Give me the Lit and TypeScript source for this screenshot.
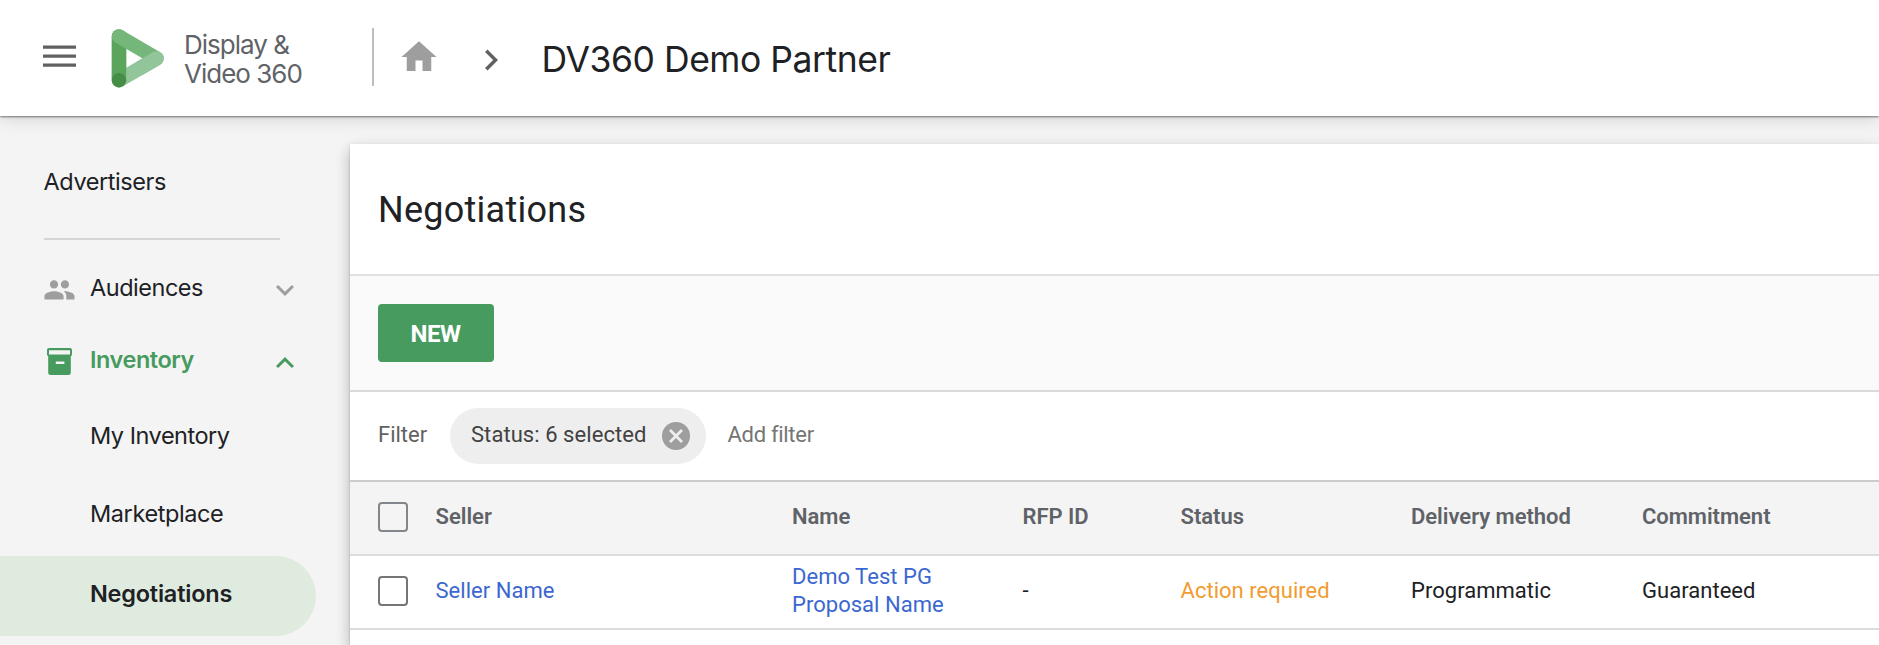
import { LitElement, html, css, svg, nothing } from "lit";
import { customElement, property } from "lit/decorators.js";
import { classMap } from "lit/directives/class-map.js";

@customElement("app-bar")
class AppBar extends LitElement {
  static styles = css`
    :host { display: block; }
    .bar {
      position: relative;
      z-index: 2;
      box-sizing: border-box;
      height: 116px;
      padding-left: 43px;
      display: flex;
      align-items: flex-start;
      background: #fff;
      box-shadow: 0 1px 2px rgba(0, 0, 0, 0.5), 0 3px 16px rgba(0, 0, 0, 0.13);
    }
    svg { display: block; flex: none; }
    .menu { margin-top: 45px; }
    .logo { margin: 28px 0 0 35px; }
    .brand {
      margin: 31px 0 0 19px;
      width: 188px;
      font: 400 26px/28.8px Inter, sans-serif;
      letter-spacing: -1px;
      color: #5f6368;
      white-space: nowrap;
    }
    .rule { width: 2px; height: 58px; margin-top: 28px; background: #bdbdbd; }
    .home { margin: 35.5px 0 0 24px; }
    .next { margin: 39px 0 0 29.5px; }
    h1 {
      margin: 37px 0 0 30px;
      font: 400 35.5px/46px Inter, sans-serif;
      letter-spacing: -0.46px;
      color: #202124;
      white-space: nowrap;
    }
  `;
  render() {
    return html`<header class="bar">
      <svg class="menu" width="33" height="23" viewBox="0 0 33 23" fill="#616161">
        <path d="M0 .6h33v3.2H0zM0 9.6h33v3.2H0zM0 18.6h33v3.2H0z" />
      </svg>
      <svg class="logo" width="54" height="61" viewBox="0 0 54 61" fill="none" stroke-width="14.4" stroke-linecap="round">
        <path d="M8 52V8.4" stroke="#5aa55b" />
        <path d="M8 52.2L45.6 30.4" stroke="#92c69a" />
        <path d="M8 52.2V8.4" stroke="#5aa55b" stroke-linecap="butt" />
        <path d="M8 8.4L45.6 30.4" stroke="#75b67b" stroke-linecap="butt" />
        <circle cx="8" cy="8.4" r="7.2" fill="#75b67b" stroke="none" />
        <circle cx="45.6" cy="30.4" r="7.2" fill="#92c69a" stroke="none" />
        <path d="M28.3 40.4L45.6 30.4" stroke="#92c69a" stroke-linecap="butt" />
        <circle cx="8" cy="52.2" r="7.2" fill="#468e47" stroke="none" />
      </svg>
      <div class="brand">Display &amp;<br />Video 360</div>
      <div class="rule"></div>
      <svg class="home" width="42" height="42" viewBox="0 0 24 24" fill="#9e9e9e">
        <path d="M10 20v-6h4v6h5v-8h3L12 3 2 12h3v8z" />
      </svg>
      <svg class="next" width="42" height="42" viewBox="0 0 24 24" fill="#616161">
        <path d="M10 6L8.59 7.41 13.17 12l-4.58 4.59L10 18l6-6z" />
      </svg>
      <h1>DV360 Demo Partner</h1>
    </header>`;
  }
}

const ICONS: Record<string, unknown> = {
  people: svg`<path transform="translate(-.9 -.5) scale(1.365)" d="M16 11c1.66 0 2.99-1.34 2.99-3S17.66 5 16 5c-1.66 0-3 1.34-3 3s1.34 3 3 3zm-8 0c1.66 0 2.99-1.34 2.99-3S9.66 5 8 5C6.34 5 5 6.34 5 8s1.34 3 3 3zm0 2c-2.33 0-7 1.17-7 3.5V19h14v-2.5c0-2.33-4.67-3.5-7-3.5zm8 0c-.29 0-.62.02-.97.05 1.16.84 1.97 1.97 1.97 3.45V19h6v-2.5c0-2.33-4.67-3.5-7-3.5z"/>`,
  archive: svg`<path fill-rule="evenodd" d="M4 2h21a2 2 0 0 1 2 2v4.5a2 2 0 0 1-1.2 1.800V26.500a2.500 2.500 0 0 1-2.500 2.500H5.700a2.500 2.500 0 0 1-2.500-2.500V10.300A2 2 0 0 1 2 8.500V4a2 2 0 0 1 2-2zM4 4.200v4.300h21V4.200zM10.800 15.400v2.500h8.600v-2.500z"/>`,
};

@customElement("side-nav")
class SideNav extends LitElement {
  static styles = css`
    :host { display: block; font: 400 23.5px/40px Inter, sans-serif; letter-spacing: -0.48px; color: #202124; }
    nav { width: 316px; padding-top: 46px; }
    .top { display: block; padding-left: 43.5px; height: 76px; letter-spacing: -0.42px; }
    hr { margin: 0 0 11px 44px; width: 236px; border: 0; height: 2px; background: #d5d5d5; }
    .group { display: flex; align-items: center; height: 73px; padding-left: 44px; }
    .group svg { display: block; flex: none; }
    .group .icon { margin: 3px 15px 0 0; fill: #9e9e9e; }
    .group .label { width: 176.5px; }
    .group .caret { margin-top: 5px; fill: #9e9e9e; }
    .open { height: 72px; color: #489b5f; font-weight: 600; letter-spacing: -0.45px; }
    .open .icon, .open .caret { fill: #489b5f; }
    .open .icon { margin-left: .500px; margin-right: 14.500px; }
    .leaf { display: flex; align-items: center; padding-left: 90px; height: 79px; }
    .leaf.short { height: 78px; margin-bottom: 3px; letter-spacing: -0.4px; }
    .leaf.active {
      box-sizing: border-box;
      height: 80px;
      padding-bottom: 5px;
      border-radius: 0 40px 40px 0;
      background: #e0ebdf;
      font-weight: 600;
      letter-spacing: -0.22px;
    }
  `;
  group(icon: string, label: string, open: boolean) {
    return html`<div class=${classMap({ group: true, open })}>
      <svg class="icon" width="31" height="31" viewBox="0 0 31 31">${ICONS[icon]}</svg>
      <span class="label">${label}</span>
      <svg class="caret" width="36" height="36" viewBox="0 0 24 24">
        <path d=${open ? "M12 8l-6 6 1.41 1.41L12 10.83l4.59 4.58L18 14z" : "M16.59 8.59L12 13.17 7.41 8.59 6 10l6 6 6-6z"} />
      </svg>
    </div>`;
  }
  render() {
    return html`<nav>
      <span class="top">Advertisers</span>
      <hr />
      ${this.group("people", "Audiences", false)} ${this.group("archive", "Inventory", true)}
      <div class="leaf">My Inventory</div>
      <div class="leaf short">Marketplace</div>
      <div class="leaf active">Negotiations</div>
    </nav>`;
  }
}

@customElement("check-box")
class CheckBox extends LitElement {
  @property({ type: Boolean, reflect: true }) muted = false;
  static styles = css`
    :host { display: block; width: 30px; height: 30px; box-sizing: border-box; border: 2px solid #757575; border-radius: 4px; }
    :host([muted]) { border-color: #80868b; }
  `;
  render() {
    return nothing;
  }
}

const COLUMNS = ["Seller", "Name", "RFP ID", "Status", "Delivery method", "Commitment"];
const ROWS = [
  [
    { text: "Seller Name", kind: "link" },
    { text: "Demo Test PG Proposal Name", kind: "link" },
    { text: "-", kind: "plain" },
    { text: "Action required", kind: "warn" },
    { text: "Programmatic", kind: "plain" },
    { text: "Guaranteed", kind: "plain" },
  ],
];

@customElement("negotiations-panel")
class NegotiationsPanel extends LitElement {
  static styles = css`
    :host { display: block; font: 400 22px/28px Roboto, sans-serif; color: #202124; }
    .panel { height: 100%; background: #fff; box-shadow: 0 1px 2px rgba(0, 0, 0, 0.2), 0 6px 14px rgba(0, 0, 0, 0.27); }
    h2 {
      margin: 0;
      box-sizing: border-box;
      height: 132px;
      padding: 42px 0 0 28px;
      border-bottom: 2px solid #e0e0e0;
      font: 400 36px/48px Roboto, sans-serif;
      letter-spacing: 0.26px;
    }
    .tools {
      box-sizing: border-box;
      height: 116px;
      padding: 28px 27.5px;
      border-bottom: 2px solid #dadada;
      background: #fafafa;
    }
    button {
      display: block;
      width: 116px;
      height: 58px;
      padding: 2px 0 0;
      border: 0;
      border-radius: 4px;
      background: #489b5f;
      color: #fff;
      font: 700 24px/28px Roboto, sans-serif;
      letter-spacing: -0.45px;
    }
    .filters {
      box-sizing: border-box;
      height: 90px;
      padding-left: 28px;
      display: flex;
      align-items: flex-start;
      padding-top: 16px;
      border-bottom: 2px solid #ccc;
      color: #757575;
    }
    .filters > span { line-height: 53px; }
    .caption { width: 72px; color: #616161; }
    .chip {
      box-sizing: border-box;
      width: 256px;
      height: 56px;
      padding-left: 21px;
      border-radius: 28px;
      background: #eee;
      color: #424242;
      display: flex;
      line-height: 53px;
      letter-spacing: 0.06px;
    }
    .chip span { width: 190.5px; white-space: nowrap; }
    .chip svg { display: block; margin-top: 14px; }
    .add { margin-left: 21.5px; letter-spacing: -0.3px; }
    .row {
      box-sizing: border-box;
      height: 74px;
      padding-left: 27.5px;
      display: grid;
      grid-template-columns: 58px 356.5px 230.5px 158px 230.5px 231px 1fr;
      align-items: center;
      border-bottom: 2px solid #dadce0;
    }
    .row > span { padding-bottom: 3px; letter-spacing: 0.03px; }
    .row > check-box { margin-bottom: 2px; }
    .head { background: #f4f4f4; color: #5f6368; font-weight: 600; }
    .head > span { letter-spacing: -0.03px; }
    .name { width: 170px; }
    .link { color: #3b67d0; }
    .warn { color: #f29b31; }
  `;
  render() {
    return html`<section class="panel">
      <h2>Negotiations</h2>
      <div class="tools"><button>NEW</button></div>
      <div class="filters">
        <span class="caption">Filter</span>
        <div class="chip">
          <span>Status: 6 selected</span>
          <svg width="28" height="28" viewBox="0 0 28 28">
            <circle cx="14" cy="14" r="14" fill="#9e9e9e" />
            <path d="M8 8l12 12M20 8L8 20" stroke="#eee" stroke-width="2.8" />
          </svg>
        </div>
        <span class="add">Add filter</span>
      </div>
      <div class="row head">
        <check-box muted></check-box>
        ${COLUMNS.map((c) => html`<span>${c}</span>`)}
      </div>
      ${ROWS.map(
        (r) => html`<div class="row">
          <check-box></check-box>
          ${r.map((c, i) => html`<span class=${classMap({ [c.kind]: true, name: i === 1 })}>${c.text}</span>`)}
        </div>`,
      )}
    </section>`;
  }
}

@customElement("app-root")
class AppRoot extends LitElement {
  static styles = css`
    :host { display: flex; flex-direction: column; height: 100vh; overflow: hidden; background: #f4f4f4; }
    .body { flex: 1; min-height: 0; display: grid; grid-template-columns: 350px 1fr; }
    negotiations-panel { margin-top: 28px; }
  `;
  render() {
    return html`<app-bar></app-bar>
      <div class="body">
        <side-nav></side-nav>
        <negotiations-panel></negotiations-panel>
      </div>`;
  }
}
